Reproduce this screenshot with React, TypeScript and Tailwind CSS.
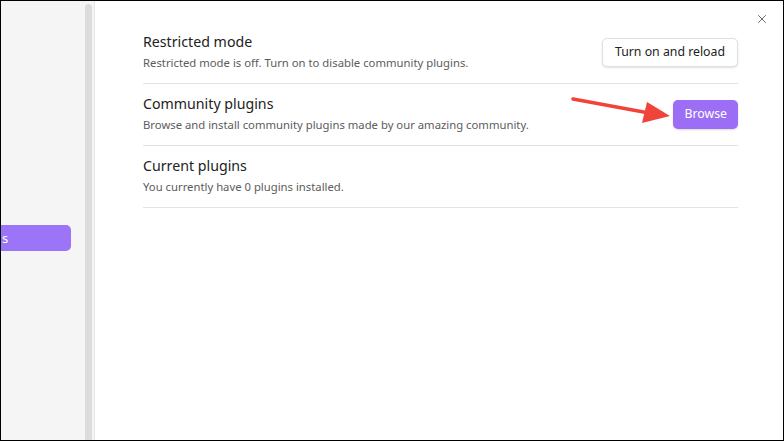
import { X } from "lucide-react";

const rows = [
  {
    title: "Restricted mode",
    desc: "Restricted mode is off. Turn on to disable community plugins.",
    action: "reload",
  },
  {
    title: "Community plugins",
    desc: "Browse and install community plugins made by our amazing community.",
    action: "browse",
  },
  {
    title: "Current plugins",
    desc: "You currently have 0 plugins installed.",
    action: null,
  },
];

function Arrow() {
  return (
    <svg className="absolute right-[calc(100%+2px)] top-[-3px]" width="100" height="32" viewBox="0 0 100 32" aria-hidden>
      <line x1="2" y1="2" x2="78" y2="16" stroke="#f0443a" strokeWidth="3.5" strokeLinecap="round" />
      <polygon points="99,19 76,5 71,26" fill="#f0443a" />
    </svg>
  );
}

export default function App() {
  return (
    <div
      className="w-[784px] h-[441px] border border-black flex bg-white overflow-hidden"
      style={{ fontFamily: '"Noto Sans", "Open Sans", sans-serif' }}
    >
      <aside className="w-[94px] shrink-0 bg-[#f5f5f5] border-r border-[#e6e6e6] flex">
        <div className="flex-1 pt-[224px]">
          <div className="h-[26px] w-[70px] rounded-r-[5px] bg-[#9b74f7] text-white text-[13px] leading-[26px] pl-[1px]">
            s
          </div>
        </div>
        <div className="w-[7px] mr-[2px] mt-[3px] rounded-t-[4px] bg-[#dcdcdc]" />
      </aside>
      <main className="relative flex-1 pl-[48px] pr-[45px] pt-[21px]">
        <button className="absolute right-[14px] top-[11px] text-[#555] leading-none">
          <X className="w-[14px] h-[14px]" strokeWidth={1.5} />
        </button>
        {rows.map((r) => (
          <div key={r.title} className="h-[62px] border-b border-[#e3e3e3] flex items-center justify-between">
            <div className="flex flex-col gap-[3px] -mt-[2px]">
              <div className="text-[14.2px] leading-[20px] text-[#222]">{r.title}</div>
              <div className="text-[11.3px] leading-[16px] text-[#5c5c5c]">{r.desc}</div>
            </div>
            {r.action === "reload" && (
              <button className="h-[29px] px-[12px] rounded-[5px] bg-white border border-[#e0e0e0] shadow-[0_1px_2px_rgba(0,0,0,0.12)] text-[12.3px] text-[#222]">
                Turn on and reload
              </button>
            )}
            {r.action === "browse" && (
              <div className="relative">
                <Arrow />
                <button className="h-[29px] px-[11px] rounded-[5px] bg-[#9b6ef5] text-white text-[12.3px] shadow-[0_1px_2px_rgba(0,0,0,0.15)]">
                  Browse
                </button>
              </div>
            )}
          </div>
        ))}
      </main>
    </div>
  );
}
